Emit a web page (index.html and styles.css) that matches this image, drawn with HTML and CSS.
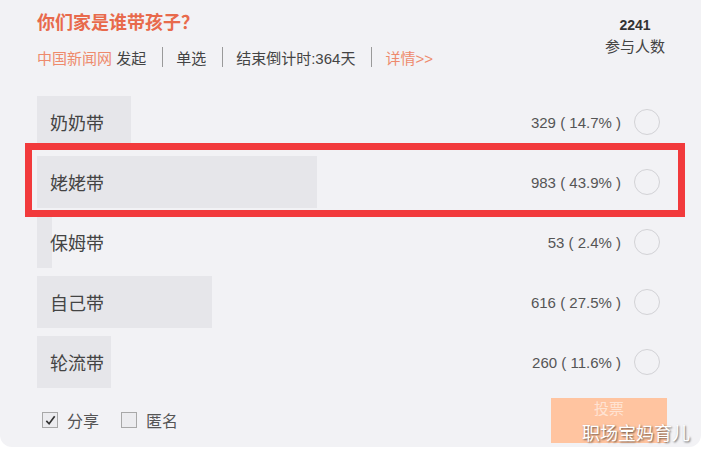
FILE: index.html
```html
<!DOCTYPE html>
<html lang="zh">
<head>
<meta charset="utf-8">
<title>你们家是谁带孩子？</title>
<link rel="stylesheet" href="styles.css">
</head>
<body>
<div class="card">
  <header class="head">
    <div class="head-main">
      <h1 class="title">你们家是谁带孩子？</h1>
      <div class="meta">
        <span class="src">中国新闻网</span><span class="dark">&nbsp;发起</span>
        <span class="sep"></span>
        <span class="dark">单选</span>
        <span class="sep"></span>
        <span class="dark">结束倒计时:364天</span>
        <span class="sep"></span>
        <span class="src">详情&gt;&gt;</span>
      </div>
    </div>
    <div class="stats">
      <div class="stats-num">2241</div>
      <div class="stats-label">参与人数</div>
    </div>
  </header>

  <div class="options">
    <div class="option" style="--w:14.7%">
      <span class="opt-label">奶奶带</span>
      <span class="opt-count">329 ( 14.7% )</span>
      <span class="radio"></span>
    </div>
    <div class="option" style="--w:43.9%">
      <span class="opt-label">姥姥带</span>
      <span class="opt-count">983 ( 43.9% )</span>
      <span class="radio"></span>
    </div>
    <div class="option" style="--w:2.4%">
      <span class="opt-label">保姆带</span>
      <span class="opt-count">53 ( 2.4% )</span>
      <span class="radio"></span>
    </div>
    <div class="option" style="--w:27.5%">
      <span class="opt-label">自己带</span>
      <span class="opt-count">616 ( 27.5% )</span>
      <span class="radio"></span>
    </div>
    <div class="option" style="--w:11.6%">
      <span class="opt-label">轮流带</span>
      <span class="opt-count">260 ( 11.6% )</span>
      <span class="radio"></span>
    </div>
  </div>

  <footer class="foot">
    <div class="checks">
      <label class="check">
        <span class="box checked">
          <svg viewBox="0 0 14 14" width="13" height="13"><path d="M2.5 7.5 L5.5 10.5 L11.5 2.5" fill="none" stroke="#333" stroke-width="1.8"/></svg>
        </span>
        <span class="check-text">分享</span>
      </label>
      <label class="check">
        <span class="box"></span>
        <span class="check-text">匿名</span>
      </label>
    </div>
    <button class="vote">投票</button>
  </footer>

  <div class="highlight"></div>
  <div class="watermark">职场宝妈育儿</div>
</div>
</body>
</html>
```

FILE: styles.css
```css
html, body {
  margin: 0;
  padding: 0;
  background: #ffffff;
}

body {
  font-family: "Liberation Sans", "Noto Sans CJK SC", sans-serif;
  width: 701px;
  height: 451px;
  overflow: hidden;
}

.card {
  position: relative;
  box-sizing: border-box;
  width: 701px;
  height: 447px;
  padding: 8px 26px 0 37px;
  background: #f2f2f5;
  border-radius: 0 0 12px 12px;
}

.head {
  display: flex;
  justify-content: space-between;
  height: 88px;
}

.title {
  margin: 0;
  font-size: 18px;
  line-height: 26px;
  font-weight: bold;
  color: #e86a4c;
  font-family: "Noto Sans CJK SC", sans-serif;
}

.meta {
  display: flex;
  align-items: center;
  margin-top: 12px;
  height: 22px;
  font-size: 15px;
  color: #444;
}

.src {
  color: #ee8a6c;
}

.dark {
  color: #444;
}

.sep {
  display: inline-block;
  width: 0;
  height: 20px;
  border-left: 1px solid #9a9a9a;
  margin: 0 13px 0 16px;
}

.stats {
  width: 70px;
  margin: 8px 5px 0 0;
  text-align: center;
}

.stats-num {
  font-size: 14px;
  font-weight: bold;
  line-height: 18px;
  color: #333;
}

.stats-label {
  margin-top: 3px;
  font-size: 15px;
  line-height: 20px;
  color: #444;
}

.options {
  display: flex;
  flex-direction: column;
  gap: 8px;
}

.option {
  display: flex;
  align-items: center;
  height: 52px;
  padding: 0 15px 0 13px;
  background: linear-gradient(to right, #e6e6ea var(--w), transparent var(--w));
}

.opt-label {
  flex: 1;
  font-size: 18px;
  color: #444;
  font-family: "Noto Sans CJK SC", sans-serif;
}

.opt-count {
  margin-right: 13px;
  font-size: 15px;
  color: #555;
}

.radio {
  box-sizing: border-box;
  width: 26px;
  height: 26px;
  border: 1.5px solid #d2d2d6;
  border-radius: 50%;
}

.foot {
  display: flex;
  align-items: center;
  justify-content: space-between;
  margin-top: 10px;
  height: 44px;
  padding: 0 8px 0 5px;
}

.checks {
  display: flex;
  align-items: center;
  gap: 22px;
}

.check {
  display: flex;
  align-items: center;
}

.box {
  box-sizing: border-box;
  display: flex;
  align-items: center;
  justify-content: center;
  width: 16px;
  height: 16px;
  border: 1px solid #a8a8a8;
  background: #ececef;
}

.check-text {
  margin-left: 9px;
  font-size: 16px;
  color: #555;
  font-family: "Noto Sans CJK SC", sans-serif;
}

.vote {
  width: 116px;
  height: 45px;
  border: none;
  padding: 0 0 24px;
  background: #ffc4a0;
  color: rgba(255, 255, 255, 0.55);
  font-size: 15px;
  line-height: 18px;
  font-family: "Noto Sans CJK SC", sans-serif;
}

.highlight {
  position: absolute;
  left: 25px;
  top: 143px;
  width: 660px;
  height: 74px;
  box-sizing: border-box;
  border: 7px solid #f23a3c;
}

.watermark {
  position: absolute;
  right: 11px;
  bottom: 6px;
  font-size: 18px;
  line-height: 18px;
  color: #ffffff;
  font-family: "Noto Sans CJK SC", sans-serif;
  text-shadow: 1px 1px 2px rgba(0, 0, 0, 0.6);
}
```
